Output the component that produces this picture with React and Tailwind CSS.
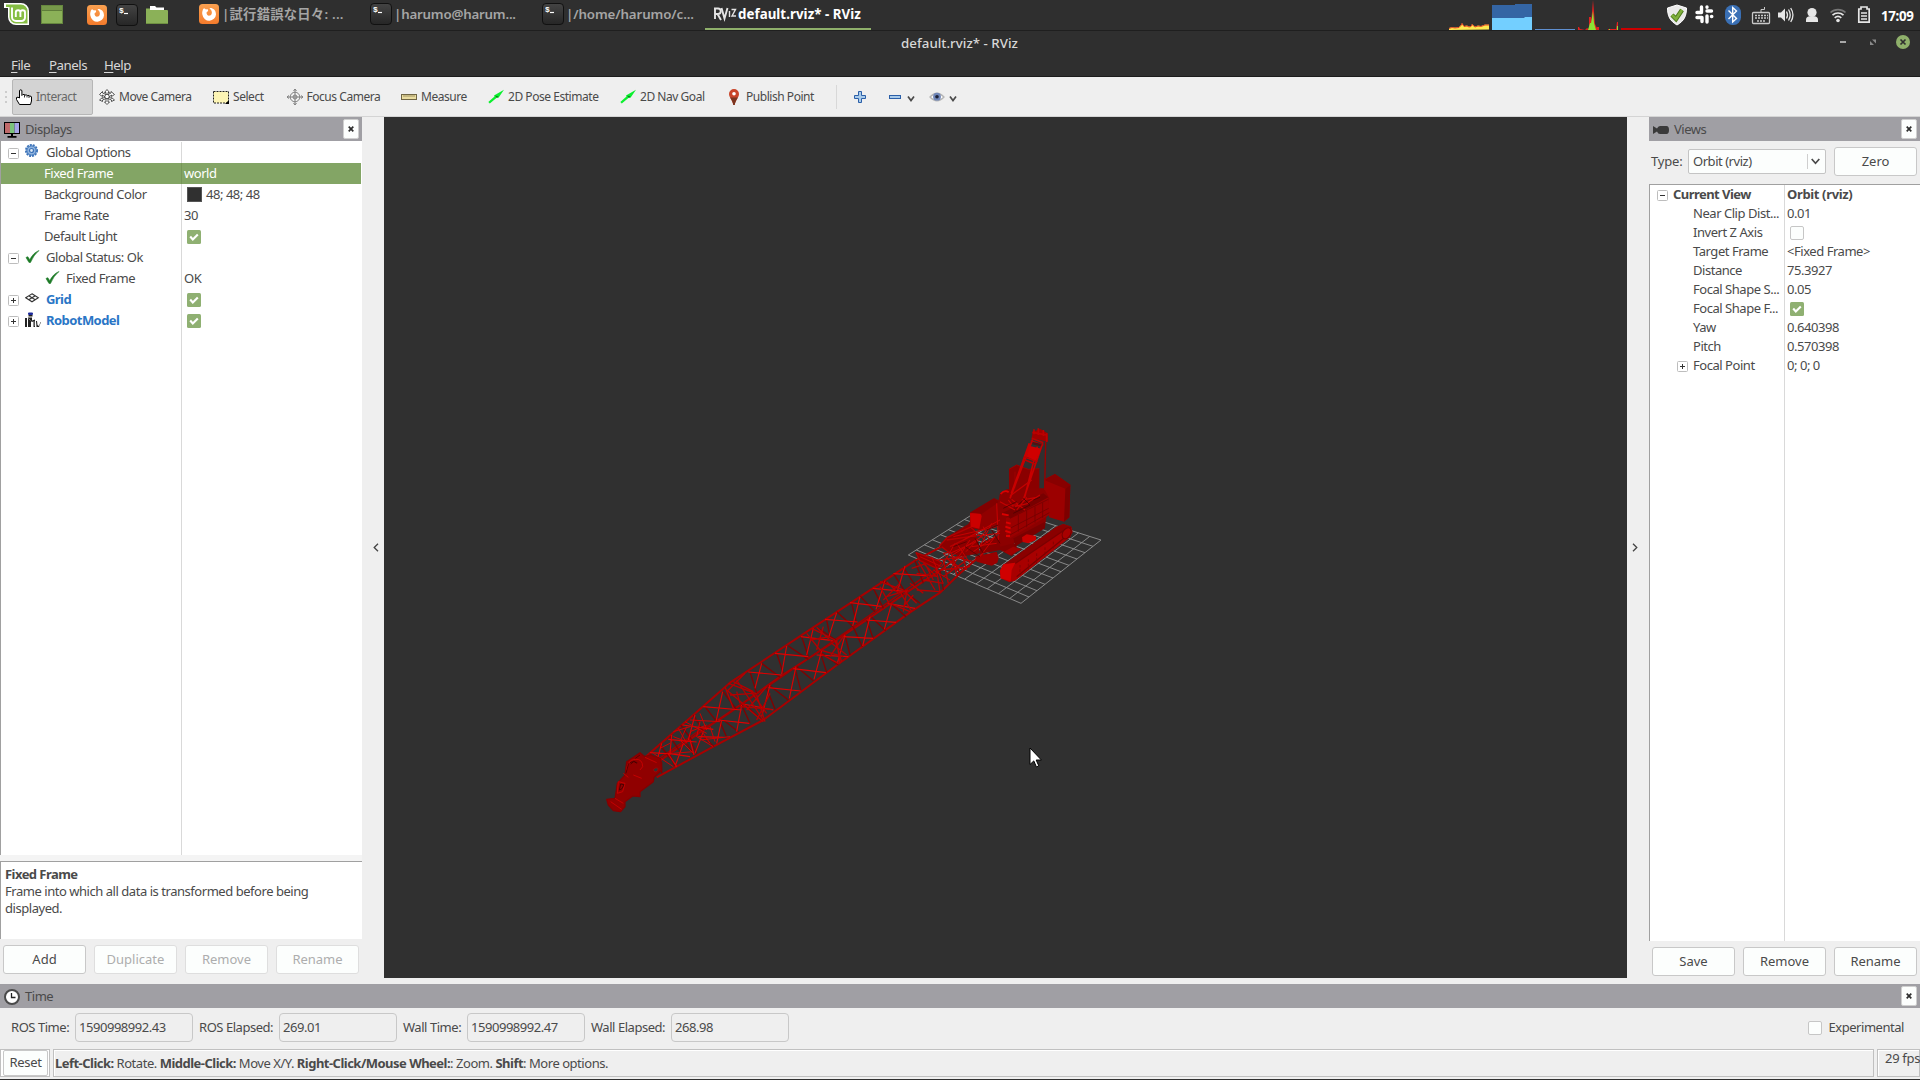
import React from "react";

const PLUS = "plus";

function MintLogo() {
  return (
    <svg width="26" height="24" viewBox="0 0 26 24" className="block">
      <path d="M0 0h17a8 8 0 0 1 8 8v14H12a8 8 0 0 1-8-8V5H0z" fill="#fff" />
      <path d="M2 1.500h15a6.500 6.500 0 0 1 6.500 6.500v12.500H12a6.500 6.500 0 0 1-6.500-6.500V4H2z" fill="#86be43" />
      <path d="M8 4.500v9.500a4 4 0 0 0 4 4h5.500a3.500 3.500 0 0 0 3.500-3.500V9.500a2.300 2.300 0 0 0-4.600 0V14M16.400 9.500a2.300 2.300 0 0 0-4.600 0V14" fill="none" stroke="#fff" strokeWidth="1.900" />
    </svg>
  );
}

function Firefox() {
  return (
    <svg width="20" height="20" viewBox="0 0 20 20" className="block">
      <defs>
        <linearGradient id="ffg" x1="0" y1="0" x2="0" y2="1">
          <stop offset="0" stopColor="#f9a050" />
          <stop offset="1" stopColor="#f47b2c" />
        </linearGradient>
      </defs>
      <rect width="20" height="20" rx="3.500" fill="url(#ffg)" />
      <path d="M3.500 7C4 5 5 3.800 5.500 4.500L7 5.500C8.500 5 9.500 5.500 9 7L7.500 8.500C7.500 11 9 12 11 11.500C13 11 13.500 8 12 6L10.500 4.200C13 3.500 17 5.500 17 10.500A6.800 6.800 0 0 1 3.500 11C3 9.500 3.200 8 3.500 7Z" fill="#fff" />
    </svg>
  );
}

function Terminal() {
  return (
    <svg width="22" height="22" viewBox="0 0 22 22" className="block">
      <defs>
        <linearGradient id="tg" x1="0" y1="0" x2="0" y2="1">
          <stop offset="0" stopColor="#444" />
          <stop offset="1" stopColor="#262626" />
        </linearGradient>
      </defs>
      <rect x="0.500" y="0.500" width="21" height="21" rx="3.500" fill="url(#tg)" stroke="#111" />
      <text x="3" y="9" fontSize="8" fontWeight="700" fill="#fff" fontFamily="Liberation Mono, monospace">$</text>
      <path d="M8 9.500h4" stroke="#fff" strokeWidth="1.200" />
    </svg>
  );
}

function Folder() {
  return (
    <svg width="22" height="20" viewBox="0 0 22 20" className="block">
      <path d="M4 1h5l1.500 1.500H18V6H4z" fill="#fff" />
      <path d="M0 3.500h4V5h17a1 1 0 0 1 1 1v12a1 1 0 0 1-1 1H1a1 1 0 0 1-1-1z" fill="#8bb158" />
      <path d="M0 18.500h22" stroke="#6f9042" />
    </svg>
  );
}

function TopBar() {
  return (
    <div className="flex h-[31px] shrink-0 items-start border-b border-[#1f1f1f] text-[13.3px] leading-[29px] font-semibold tracking-normal text-[#a5a5a5]">
      <div className="ml-[4px] mt-[3px] w-[37px] shrink-0"><MintLogo /></div>
      <div className="mt-[5px] h-[19px] w-[22px] shrink-0 border border-[#66873f] bg-[#8bb158]"><div className="h-[5px] border-b border-[#5f7d3a] bg-[#76984a]" /></div>
      <div className="ml-[24px] mt-[5px] w-[29px] shrink-0"><Firefox /></div>
      <div className="mt-[4px] w-[30px] shrink-0"><Terminal /></div>
      <div className="mt-[5px] w-[53px] shrink-0"><Folder /></div>
      <div className="mt-[4px] w-[23px] shrink-0"><Firefox /></div>
      <div className="w-[148px] shrink-0 whitespace-nowrap tracking-[0.25px]">|試行錯誤な日々: ...</div>
      <div className="mt-[3px] w-[24px] shrink-0"><Terminal /></div>
      <div className="w-[148px] shrink-0 whitespace-nowrap tracking-[-0.2px]">|harumo@harum...</div>
      <div className="mt-[3px] w-[24px] shrink-0"><Terminal /></div>
      <div className="w-[139px] shrink-0 whitespace-nowrap tracking-[-0.1px]">|/home/harumo/c...</div>
      <div className="flex h-[30px] w-[166px] shrink-0 border-b-2 border-[#8fb06b] pl-[8px] font-bold tracking-[0.05px] text-white">
        <svg width="25" height="28" viewBox="0 0 25 28" className="shrink-0">
          <g fill="none" stroke="#e4e4e4" strokeWidth="1.900">
            <path d="M2 8v11M1 8.500h4a2.700 2.700 0 0 1 0 5.500H2.500M4.500 14l3.500 6" />
            <path d="M8.500 8l3 10.500L14.500 8" />
            <path d="M16.500 11v6M18.500 9.500h4l-3.500 6.500h4" strokeWidth="1.400" />
          </g>
        </svg>
        <span className="whitespace-nowrap">default.rviz* - RViz</span>
      </div>
      <svg width="216" height="30" viewBox="1448 0 216 30" className="ml-[577px] shrink-0">
        <path d="M1449 30v-2l3-1 3 .5 4-.5 2-2 1-2 2 3 3-.5 2 1 2-.5 1-2 3 2.500 3-1 3 .5 4-1.500h4v5z" fill="#fce94f" />
        <path d="M1449 28.500l3-1 3 .5 4-.5 2-2 1-2 2 3 3-.5 2 1 2-.5 1-2 3 2.500 3-1 3 .5 4-1.500h4" fill="none" stroke="#e02020" strokeWidth="0.800" />
        <path d="M1492 5h23V4h17v26h-40z" fill="#3465a4" />
        <path d="M1492 18h32l1-1h7v13h-40z" fill="#73cfff" />
        <rect x="1535" y="29" width="40" height="1" fill="#5f8fd0" />
        <path d="M1578 30v-3h1l1 2 5 1 2-2 2 1 0-12h2v6l1-11 1-12 1 12 1 12 2 4v-1h2v3zM1608 30v-1h8l1-7h1v8z" fill="#e02020" />
        <path d="M1588 30l2-7h1l2-12 1 12 2 7zM1609 29h1v1h-1zM1617 26h1v4h-1z" fill="#8ae234" />
        <rect x="1621" y="28" width="40" height="2" fill="#cc0000" />
      </svg>
      <svg width="206" height="30" viewBox="1664 0 206 30" className="shrink-0">
        <path d="M1677 5l9.500 3c0 8-2.500 13-9.500 17-7-4-9.500-9-9.500-17z" fill="#eaeaea" stroke="#fff" />
        <path d="M1672 15l4 4 6-9" fill="none" stroke="#4c7a1b" strokeWidth="4.500" />
        <path d="M1672 15l4 4 6-9" fill="none" stroke="#7fb03c" strokeWidth="2.500" />
        <g stroke="#fff" strokeWidth="3.400" strokeLinecap="round">
          <path d="M1701.500 7v5.500M1707 7v.2M1707 11h4.500M1697 12.500h4.500M1697 17.500h4.500M1702 17.500v4M1707 16v6M1711.500 16.500h.3" />
        </g>
        <rect x="1725" y="5" width="16" height="20" rx="7.500" fill="#3a70b5" />
        <path d="M1728.500 10.500l8 8-3.800 3.500V7.500l3.800 3.500-8 8" fill="none" stroke="#fff" strokeWidth="1.400" />
        <g fill="none" stroke="#c9c9c9">
          <rect x="1752.500" y="12.500" width="17" height="11" rx="1" strokeWidth="1.300" />
          <path d="M1755 15.500h13M1755 18h13M1757 21h9" strokeWidth="1.600" strokeDasharray="2 1" />
          <path d="M1761 12V9.500h3.500V7" />
        </g>
        <path d="M1778 12.500h3l4-4v13l-4-4h-3z" fill="#e6e6e6" />
        <path d="M1786.500 11.500q2 3.500 0 7M1788.500 9.500q3.500 5.500 0 11M1790.700 8q4.500 7 0 14" fill="none" stroke="#e6e6e6" strokeWidth="1.300" />
        <circle cx="1812" cy="12.500" r="4.600" fill="#e6e6e6" />
        <path d="M1806 22v-2.500q0-3 4-3.300h4q4 .3 4 3.300V22z" fill="#e6e6e6" />
        <g fill="none" strokeWidth="1.700">
          <path d="M1830.500 12.500a11 11 0 0 1 15 0" stroke="#777" />
          <path d="M1832.500 15.200a8 8 0 0 1 11 0M1834.700 17.800a5 5 0 0 1 6.600 0" stroke="#e6e6e6" />
        </g>
        <circle cx="1838" cy="20.500" r="1.800" fill="#e6e6e6" />
        <path d="M1861 7v2h-2.200v13.200h10.400V9H1867V7z" fill="none" stroke="#e6e6e6" strokeWidth="1.700" />
        <path d="M1861 13h6M1861 16h6M1861 19h6" stroke="#e6e6e6" strokeWidth="1.700" />
      </svg>
      <div className="ml-[11px] pt-[2px] font-bold tracking-[-0.3px] text-white">17:09</div>
    </div>
  );
}

function TitleBar() {
  return (
    <div className="flex h-[46px] shrink-0 flex-col border-b border-[#1c1c1c]">
      <div className="flex h-[24px] items-center">
        <div className="w-[1839px] pl-[80px] text-center text-[13.3px] leading-[24px] font-medium tracking-[0.02px] text-[#d8d8d8]">default.rviz* - RViz</div>
        <svg width="81" height="24" viewBox="1839 31 81 24">
          <path d="M1840 42h6" stroke="#a8a8a8" strokeWidth="2" />
          <path d="M1872 39.500h4v4zM1870 41v4h4z" fill="#8a8a8a" />
          <circle cx="1903" cy="42" r="7" fill="#8fb06b" />
          <path d="M1900.500 39.500l5 5m0-5l-5 5" stroke="#2f2f2f" strokeWidth="1.700" />
        </svg>
      </div>
      <div className="flex h-[20px] text-[13.3px] leading-[21px] tracking-[-0.5px] text-[#d8d8d8]">
        <div className="ml-[11px] w-[38px]"><u className="underline-offset-2">F</u>ile</div>
        <div className="w-[55px]"><u className="underline-offset-2">P</u>anels</div>
        <div><u className="underline-offset-2">H</u>elp</div>
      </div>
    </div>
  );
}

const toolIcons = {
  move: (
    <g fill="none" stroke="#444" strokeWidth="0.900">
      <path d="M8 .5l2.500 3H9v2l3-1.500V2.500l3.500 3-3 2V6L10 8l2.500 1.500V8.500l3 2.500-3 1.500v-1.500L9 9.500V13h1.500L8 15.500 5.500 13H7V9.500L3.500 11v1.500L.5 11l3-2.500v1L6 8 3.500 6v1.500L.5 5.500l3-3V4L7 5.500v-2H5.500z" fill="#fff" />
      <circle cx="8" cy="7.500" r="2.200" />
    </g>
  ),
  select: (
    <g>
      <rect x="0.500" y="2.500" width="15" height="11.500" fill="#fdf5b5" stroke="#222" strokeDasharray="2 1" />
      <path d="M16 11v4h-4z" fill="#000" />
    </g>
  ),
  focus: (
    <g fill="none" stroke="#808080">
      <circle cx="8" cy="8" r="4.800" />
      <circle cx="8" cy="8" r="2" />
      <path d="M8 0v16M0 8h16" />
      <path d="M6.500 2L8 0l1.500 2M6.500 14L8 16l1.500-2M2 6.500L0 8l2 1.500M14 6.500L16 8l-2 1.500" />
    </g>
  ),
  measure: (
    <g>
      <rect x="0.500" y="5.500" width="15" height="5" fill="#e9dca0" stroke="#6f6543" />
      <path d="M3 6v2M5 6v2M7 6v2M9 6v2M11 6v2M13 6v2" stroke="#8a7d50" strokeWidth="0.800" />
    </g>
  ),
  arrow: (
    <g>
      <path d="M.3 13L6.500 7.500 6 6.500 16 .8l-5.500 8-1.500-.3L1.800 14.500z" fill="#0bf02e" />
      <path d="M7 6.500l3.500 1-1.500 1.500z" fill="#0a7a1c" />
    </g>
  ),
  pin: (
    <g>
      <path d="M8 0a5 5 0 0 1 5 5C13 8.300 9.500 11 8.700 16H7.300C6.500 11 3 8.300 3 5A5 5 0 0 1 8 0z" fill="#c9452a" />
      <path d="M4 8.500h8C10.500 11 9 13 8.700 16H7.300C7 13 5.500 11 4 8.500z" fill="#7a3520" />
      <circle cx="8" cy="4.800" r="1.800" fill="#fff" />
    </g>
  ),
};

const tools = [
  ["move", "Move Camera", "w-[114px]"],
  ["select", "Select", "w-[73.500px]"],
  ["focus", "Focus Camera", "w-[114.500px]"],
  ["measure", "Measure", "w-[87px]"],
  ["arrow", "2D Pose Estimate", "w-[132px]"],
  ["arrow", "2D Nav Goal", "w-[106px]"],
  ["pin", "Publish Point", "w-[110px]"],
];

function Chevron() {
  return (
    <svg width="8" height="8" viewBox="0 0 8 8"><path d="M1 1.500l3 4 3-4" fill="none" stroke="#4a4a4a" strokeWidth="1.700" /></svg>
  );
}

function Toolbar() {
  return (
    <div className="flex h-[40px] shrink-0 items-center border-b border-[#d4d4d4] bg-[#efefef] text-[12px]">
      <div className="ml-[5px] flex w-[7px] flex-col gap-[3px]">
        <i className="block size-[2px] bg-[#ccc]" /><i className="block size-[2px] bg-[#ccc]" /><i className="block size-[2px] bg-[#ccc]" />
      </div>
      <div className="flex h-[36px] w-[81px] items-center gap-[4px] rounded-[2px] border border-[#b6b6b6] bg-[#d3d3d3] pl-[3px]">
        <svg width="16" height="16" viewBox="0 0 16 16">
          <path d="M3.500 9V2a1.200 1.200 0 0 1 2.400 0v4.500l1-1h1.500l.6.500h1.500l.8.500h1.700l.8.700H15l.5.800v4L14.500 15.500H3.500L.5 10.500V8.500l1.500-.3z" fill="#fff" stroke="#000" strokeLinejoin="round" />
          <path d="M8.500 6v2.500M11 6.500v2M13 7v2" stroke="#000" strokeWidth="0.800" />
        </svg>
        <span className="text-[#686868]">Interact</span>
      </div>
      <div className="ml-[6px] flex">
        {tools.map(([k, label, w], i) => (
          <div key={i} className={`flex items-center gap-[4px] whitespace-nowrap ${w}`}>
            <svg width="16" height="16" viewBox="0 0 16 16" className="shrink-0">{toolIcons[k]}</svg>
            {label}
          </div>
        ))}
      </div>
      <div className="h-[24px] w-px bg-[#d8d8d8]" />
      <svg width="12" height="12" viewBox="0 0 12 12" className="ml-[17px]"><path d="M4.500.5h3v4h4v3h-4v4h-3v-4h-4v-3h4z" fill="#a9cbea" stroke="#2b5fa8" /></svg>
      <svg width="12" height="12" viewBox="0 0 12 12" className="ml-[23px]"><rect x="0.500" y="4.500" width="11" height="3" fill="#a9cbea" stroke="#2b5fa8" /></svg>
      <div className="ml-[6px] pt-[4px]"><Chevron /></div>
      <svg width="16" height="12" viewBox="0 0 16 12" className="ml-[14px]">
        <path d="M1 6Q8-1.500 15 6 8 13.500 1 6z" fill="#fff" stroke="#b5b5b5" strokeWidth="1.300" />
        <circle cx="8" cy="5.700" r="3.900" fill="#6f86b8" />
        <circle cx="8" cy="5.700" r="1.800" fill="#1b2036" />
      </svg>
      <div className="ml-[4px] pt-[4px]"><Chevron /></div>
    </div>
  );
}

function CloseBtn() {
  return (
    <div className="mr-[3px] flex h-[20px] w-[16px] items-center justify-center rounded-[2px] border border-[#cfcfcf] bg-[#fcfefd]">
      <svg width="6" height="6" viewBox="0 0 6 6"><path d="M.7.7l4.600 4.600m0-4.600L.7 5.300" stroke="#2d2d2d" strokeWidth="1.700" /></svg>
    </div>
  );
}

function DockTitle({ icon, children }) {
  return (
    <div className="flex h-[24px] shrink-0 items-center bg-[#a09fa4] pl-[4px]">
      <svg width="16" height="16" viewBox="0 0 16 16" className="mt-px">{icon}</svg>
      <span className="ml-[5px] flex-1 pt-[2px]">{children}</span>
      <CloseBtn />
    </div>
  );
}

function Expander({ kind }) {
  return (
    <svg width="11" height="11" viewBox="0 0 11 11" className="shrink-0">
      <rect x="0.500" y="0.500" width="10" height="10" rx="1" fill="#fff" stroke="#bdbdbd" />
      <path d={kind === PLUS ? "M3 5.500h5M5.500 3v5" : "M3 5.500h5"} stroke="#333" />
    </svg>
  );
}

function Check({ on = true }) {
  return on ? (
    <svg width="14" height="14" viewBox="0 0 14 14">
      <rect width="14" height="14" rx="1.500" fill="#8fb072" />
      <path d="M3.200 6.500l2.600 3 5-5" fill="none" stroke="#fff" strokeWidth="2.100" />
    </svg>
  ) : (
    <svg width="14" height="14" viewBox="0 0 14 14"><rect x="0.500" y="0.500" width="13" height="13" rx="1.500" fill="#fcfefd" stroke="#c6c6c6" /></svg>
  );
}

function Btn({ children, off }) {
  return (
    <div className={`flex h-[29px] w-[83px] items-center justify-center rounded-[3px] border bg-[#fcfefd] tracking-normal ${off ? "border-[#dedede] text-[#adadad]" : "border-[#c8c8c8]"}`}>{children}</div>
  );
}

const tick = <path d="M1 8.500l1.800-.8 2 3Q8 4 14 1.500 8.500 6 5.500 13.500H4z" fill="#1c7a26" stroke="#1c7a26" strokeWidth="0.600" />;
const gear = (
  <g>
    <circle cx="6.500" cy="6.500" r="5.600" fill="#a9c5e8" stroke="#3b72b8" strokeWidth="1.800" strokeDasharray="2 1" />
    <circle cx="6.500" cy="6.500" r="4.500" fill="#8fb3de" stroke="#3b72b8" strokeWidth="0.800" />
    <circle cx="6.500" cy="6.500" r="2" fill="#dce8f5" stroke="#3b72b8" strokeWidth="1.200" />
  </g>
);
const gridIcon = (
  <path d="M7 2.800l6.300 4-6.300 4-6.300-4zM3.800 4.800l6.400 4M10.200 4.800l-6.400 4" fill="none" stroke="#333" strokeWidth="1.100" />
);
const robotIcon = (
  <g>
    <rect x="3" y="0.500" width="5" height="2.500" rx="1" fill="#1d2a9a" />
    <path d="M3.500 3h4v1.500h-4zM0 6h2v9H0zM3 5.500h4v3l3-1v7.500H8.500V10L6 9.500v5.500H3zM11 9h1l.5 4 1.500 1 1.500-4h.5l-2 5h-2.500z" fill="#222" />
    <path d="M3.500 6.500l2 2M9 9v5" stroke="#888" />
  </g>
);

const displays = [
  { exp: "minus", icon: gear, name: "Global Options" },
  { name: "Fixed Frame", value: "world", sel: true, pad: "pl-[43px]" },
  { name: "Background Color", swatch: true, pad: "pl-[43px]" },
  { name: "Frame Rate", value: "30", pad: "pl-[43px]" },
  { name: "Default Light", check: true, pad: "pl-[43px]" },
  { exp: "minus", icon: tick, name: "Global Status: Ok" },
  { icon: tick, name: "Fixed Frame", value: "OK", pad: "pl-[44px]" },
  { exp: PLUS, icon: gridIcon, name: "Grid", check: true, link: true },
  { exp: PLUS, icon: robotIcon, name: "RobotModel", check: true, link: true },
];

function Displays() {
  return (
    <div className="flex w-[362px] shrink-0 flex-col">
      <DockTitle
        icon={
          <g>
            <rect x="0.500" y="0.500" width="15" height="11" fill="#000" stroke="#000" />
            <rect x="1" y="1" width="5" height="10" fill="#c06a6a" />
            <rect x="6" y="1" width="4.500" height="10" fill="#7cc47c" />
            <rect x="10.500" y="1" width="4.500" height="10" fill="#a5a5e8" />
            <path d="M7 12h2v2h3.500v1.700h-9V14H7z" fill="#000" />
          </g>
        }
      >
        Displays
      </DockTitle>
      <div className="relative flex h-[714px] flex-col border-l border-[#a0a0a0] bg-white pt-px">
        <div className="absolute top-px bottom-0 left-[180px] w-px bg-[#d9d9d9]" />
        {displays.map((r, i) => (
          <div key={i} className={`relative flex h-[21px] items-center leading-[18px] ${r.sel ? "mr-px bg-[#83a565] text-white" : ""}`}>
            <div className={`flex w-[180px] items-center ${r.pad || "pl-[7px]"} ${r.link ? "font-bold tracking-[-0.55px] text-[#2a76c6]" : ""}`}>
              {r.exp && <div className="mr-[6px] pt-[2px]"><Expander kind={r.exp} /></div>}
              {r.icon && <svg width="16" height="16" viewBox="0 0 16 16" className="mr-[5px] mb-px shrink-0">{r.icon}</svg>}
              <span className="mb-[2px] whitespace-nowrap">{r.name}</span>
            </div>
            {r.sel && <div className="h-full w-px bg-[#779658]" />}
            <div className={`flex items-center ${r.sel ? "pl-[2px]" : "pl-[3px]"}`}>
              {r.swatch && (
                <>
                  <div className="ml-[3px] size-[15px] border border-[#555] bg-[#303030]" />
                  <span className="mb-[2px] ml-[4px]">48; 48; 48</span>
                </>
              )}
              {r.value && <span className="mb-[2px]">{r.value}</span>}
              {r.check && <div className="ml-[3px]"><Check /></div>}
            </div>
          </div>
        ))}
      </div>
      <div className="h-[6px] bg-[#f4f4f4]" />
      <div className="h-[78px] border-t border-l border-[#a0a0a0] bg-white pt-[4px] pl-[4px] leading-[17px]">
        <div className="font-bold tracking-[-0.55px]">Fixed Frame</div>
        <div>Frame into which all data is transformed before being</div>
        <div>displayed.</div>
      </div>
      <div className="flex gap-[8px] pt-[6px] pl-[3px]">
        <Btn>Add</Btn><Btn off>Duplicate</Btn><Btn off>Remove</Btn><Btn off>Rename</Btn>
      </div>
    </div>
  );
}

const views = [
  ["Near Clip Dist...", "0.01"],
  ["Invert Z Axis", false],
  ["Target Frame", "<Fixed Frame>"],
  ["Distance", "75.3927"],
  ["Focal Shape S...", "0.05"],
  ["Focal Shape F...", true],
  ["Yaw", "0.640398"],
  ["Pitch", "0.570398"],
  ["Focal Point", "0; 0; 0"],
];

function Views() {
  return (
    <div className="flex w-[271px] shrink-0 flex-col">
      <DockTitle icon={<path d="M0 4l4 2.500Q5 4 7 4h6.500Q16 4 16 8t-2.500 4H7Q5 12 4 9.500L0 12z" fill="#3a3a3a" />}>Views</DockTitle>
      <div className="flex h-[43px] items-center pb-[2px] pl-[2px]">
        <span className="w-[37px] tracking-[-0.2px]">Type:</span>
        <div className="flex h-[25px] w-[138px] items-center rounded-[2px] border border-[#c4c4c4] bg-[#fcfefd] pl-[4px]">
          <span className="w-[114px]">Orbit (rviz)</span>
          <div className="mr-[3px] h-[15px] w-px bg-[#cfcfcf]" />
          <svg width="9" height="7" viewBox="0 0 9 7"><path d="M.7 1l3.800 4.300L8.300 1" fill="none" stroke="#4a4a4a" strokeWidth="1.700" /></svg>
        </div>
        <div className="ml-[8px]"><Btn>Zero</Btn></div>
      </div>
      <div className="relative h-[757px] border-t border-l border-[#a0a0a0] bg-white">
        <div className="absolute inset-y-0 left-[134px] w-px bg-[#d9d9d9]" />
        <div className="flex h-[19px] items-center font-bold tracking-[-0.55px]">
          <div className="flex w-[137px] items-center gap-[5px] pl-[7px]"><div className="pt-[2px]"><Expander /></div>Current View</div>
          <span className="tracking-[-0.35px]">Orbit (rviz)</span>
        </div>
        {views.map(([n, v], i) => (
          <div key={n} className="flex h-[19px] items-center">
            <div className="flex w-[137px] items-center whitespace-nowrap">
              <div className="w-[43px] pt-[2px] pl-[27px]">{i === 8 && <Expander kind={PLUS} />}</div>
              {n}
            </div>
            {typeof v === "string" ? v : <div className="ml-[3px] pt-px"><Check on={v} /></div>}
          </div>
        ))}
      </div>
      <div className="flex gap-[8px] pt-[6px] pl-[3px]"><Btn>Save</Btn><Btn>Remove</Btn><Btn>Rename</Btn></div>
    </div>
  );
}

// Ground grid: ten cells per side, spanned by three of its corners.
const gridLines = Array.from({ length: 11 }, (_, i) => {
  const t = i / 10;
  return `M${25 + 338 * t} ${435 + 145 * t}L${265 + 338 * t} ${283 + 107 * t}M${25 + 240 * t} ${435 - 152 * t}L${363 + 240 * t} ${580 - 190 * t}`;
}).join("");

function Crane() {
  return (
    <svg viewBox="384 117 1243 861" className="block h-full w-full">
      {/* Boom: chords and lattice */}
      <g transform="translate(590 540) scale(.33333)" fill="none" stroke="#b00000" strokeWidth="3.600" strokeLinejoin="round">
        <g transform="translate(930 -390)">
          <path d={gridLines} stroke="#8f8f8f" strokeWidth="2.800" />
        </g>
        <path d="M162 655L310 525 420 428 670 262 975 62 1045 25 1100 0M200 712L370 620 520 540 745 372 960 217 1050 158 1110 100 1180 40M190 676L330 577 455 492 575 407 690 333 850 226 950 157 1050 92 1140 20" stroke="#a80000" strokeWidth="6" />
        <path d="M195 664L330 570 400 532 500 462 640 366 740 296 880 197 1000 112 1050 80" stroke="#a00000" strokeWidth="4" />
        <path d="M515 370L570 412M595 318L655 358M680 262L738 300M740 215L790 260M810 168L855 215M880 122L940 165M940 82L975 135M480 395L500 460M560 340L580 400M635 290L655 350M710 240L720 290M785 190L800 250M850 145L880 205M910 100L945 155M540 437L595 480M620 380L670 422M615 385L632 450M690 335L710 397M690 335L745 375M790 262L817 320M845 232L887 272M830 240L850 297M900 188L948 230M950 160L990 190M345 500L380 545M400 455L440 510M400 540L445 575M390 545L410 592M455 495L480 550M460 490L515 540M530 445L555 508M310 525L340 575M272 555L305 600M240 590L270 635M210 615L240 655M180 640L210 672M215 665L215 700M240 645L255 680M290 610L312 645M330 580L372 620M975 62L1000 130M1050 90L1060 150M1090 60L1110 100M765 285L780 345M300 600L320 640" stroke="#820000" strokeWidth="4" />
        <path d="M475 396L575 405M515 370L495 445M555 340L655 350M590 318L575 402M633 290L728 302M670 265L650 345M705 238L803 246M740 218L716 292M780 188L875 199M810 170L788 258M848 145L950 155M885 122L858 208M910 101L1010 107M945 78L922 155M340 500L455 510M398 455L378 545M278 555L370 568M315 525L295 600M235 598L320 606M245 585L240 640M180 638L250 642M215 610L200 665M535 443L632 453M540 435L515 530M610 386L708 398M618 380L598 475M695 332L672 418M680 345L775 350M760 290L850 295M765 285L742 370M840 230L818 318M830 240L918 247M905 190L883 268M893 190L975 205M385 540L478 550M395 540L380 610M455 495L440 575M460 492L550 510M325 590L400 592M340 575L315 640M280 610L255 680M235 640L300 650M300 600L312 645M235 642L260 680" stroke="#e00000" strokeWidth="3.400" />
        <path d="M415 430L500 462M430 425L490 455M410 450L470 500M405 440L430 505M440 420L520 540M465 400L410 455M480 450L530 520M455 490L520 545M450 500L545 508M440 455L450 490M420 465L490 460M500 465L525 545M530 440L470 510M500 540L540 460M665 265L735 300M680 262L725 305M650 280L690 330M660 300L720 290M700 260L680 330M690 330L760 350M690 340L745 370M735 300L755 365M760 290L720 350M725 310L770 345M740 300L750 370M870 125L940 150M890 125L925 160M870 140L900 195M880 180L930 130M930 155L965 215M950 155L940 215M900 190L960 215M890 170L955 150M970 165L940 200M945 155L980 190M960 130L1000 160M985 65L1035 150M1000 70L1040 110M980 100L1045 110M1000 60L1030 120M1035 60L1050 155M965 85L1010 70M980 150L1050 155M1000 120L1060 130M1060 60L1075 130M1060 110L1130 60M1070 55L1120 90M1080 20L1100 105M1050 90L1140 80M1090 50L1150 65M1105 5L1130 90M1060 40L1170 20" stroke="#b40000" strokeWidth="4" />
        <path d="M250 575L300 560M265 565L290 610M285 545L350 580M330 520L350 570M300 540L390 545M330 545L320 590M300 575L350 555M320 590L370 620M360 560L375 605M340 580L360 610M250 640L310 635M270 600L310 640M290 560L270 605M210 625L240 610M330 600L420 590M190 640L250 680M250 590L290 605" stroke="#d00000" strokeWidth="3" />
        <path d="M978 38L990 62 1040 85 1055 70 1045 62z" fill="#900000" />
        {/* Boom tip and hook block */}
        <path d="M165 650L180 645 212 655 215 690 192 712 190 725 150 755 150 770 128 768 105 785 105 800 92 815 70 812 55 795 50 778 75 775 82 730 105 705 110 665 130 652 150 638 158 645z" fill="#900000" stroke="#850000" />
        <path d="M165 652L200 668M110 690Q112 660 135 658T158 680L150 690M85 725L105 730 98 755 82 760zM130 705L155 715M75 775L100 790M62 785L95 808M100 700L115 712" stroke="#c40000" strokeWidth="3" />
        <path d="M120 668q10-8 22 0M150 645l-14 10M108 700l8-30" stroke="#5a0000" strokeWidth="3" />
        <path d="M190 688q6-6 14-4 2 8-6 12-8 0-8-8z" fill="#303030" strokeWidth="2" />
        <path d="M92 732l10 2-6 12-8 4zM122 672l10-8 8 6" stroke="#4a0000" strokeWidth="3" />
      </g>
      {/* Carbody, cab, mast and tracks */}
      <g transform="translate(900 410) scale(.33333)" strokeLinejoin="round">
        <path d="M118 410L140 382 205 342 215 325 230 380 240 430 180 440z" fill="#8c0000" />
        <path d="M118 408L142 382 215 350M140 390L210 380M150 410L230 370M125 410L150 430" stroke="#b40000" strokeWidth="4" fill="none" />
        <path d="M225 440L290 425 296 445 292 458 275 467 230 455z" fill="#9a0000" />
        <path d="M240 400L300 375 350 405 350 425 335 438 300 420 240 432z" fill="#840000" />
        <path d="M327 178L350 165 385 178 418 176 418 250 327 262z" fill="#8a0000" />
        <path d="M327 178L350 165 385 178 418 176 M345 185v50" fill="none" stroke="#a00000" strokeWidth="3" />
        <path d="M432 208L465 192 511 224 508 322 492 335 448 322 432 240z" fill="#9c0000" />
        <path d="M432 210L496 236 511 224 465 192z" fill="#880000" />
        <path d="M496 236L511 224 508 322 492 335z" fill="#7d0000" />
        <path d="M210 308L282 265 300 272 305 340 245 362 210 352z" fill="#900000" />
        <path d="M210 310L240 308 245 318 238 356 212 350z" fill="#cc0000" />
        <path d="M210 308L282 265 298 275 245 312z" fill="#820000" />
        <path d="M300 250L320 238 400 235 432 235 448 265 440 315 435 350 340 400 300 410 290 300z" fill="#8c0000" />
        <path d="M318 325L445 262 448 315 330 385 318 380z" fill="#9a0000" />
        <path d="M305 310L430 250 445 262 330 325z" fill="#780000" />
        <path d="M330 325L445 268M330 355L446 295M355 315v50M380 302v50M405 290v48M428 278v46M330 375L448 308" fill="none" stroke="#740000" strokeWidth="2.500" />
        <path d="M318 337l14 4M316 350l16 5M316 363l16 5M318 378h12M306 312l20 4M302 252q12-14 24-5" fill="none" stroke="#dc0000" strokeWidth="5.500" />
        <path d="M340 385L435 335 435 355 345 410z" fill="#7a0000" />
        <path d="M366 382L380 373 408 378 408 390 385 400 368 396z" fill="#c80000" />
        <path d="M312 425L340 410 365 418 330 436z" fill="#a00000" />
        <path d="M198 425L270 350M190 390L300 330M215 410L290 400M240 440L300 360M205 380L300 370M250 350L270 395M275 340L240 410M290 280L295 390M160 380L290 350M210 350L265 400M220 425L285 380M150 440L260 370" stroke="#c80000" strokeWidth="3" fill="none" />
        <path d="M125 470L165 400M110 450L200 440M150 480L210 390M130 430L180 490M170 400L210 460M150 430L240 390M100 480L150 510M95 440L130 520M60 440L125 470" stroke="#c40000" strokeWidth="3" fill="none" />
        <path d="M195 410L240 440M260 360L295 345M225 385L250 430M160 410L200 395M275 360L300 400" stroke="#5e0000" strokeWidth="3" fill="none" />
        {/* A-frame mast */}
        <path d="M398 88L330 265M428 100L368 275M412 110L374 262M388 100L334 250" stroke="#c80000" strokeWidth="5" fill="none" />
        <path d="M398 66L420 56 443 70 444 95 395 85z" fill="#a00000" />
        <path d="M397 67L440 75M402 58v15M415 55v20M430 60v18M440 70v26M395 85L430 98M392 92L430 106M372 140L412 155M370 148L405 162" stroke="#bc0000" strokeWidth="5" fill="none" />
        <path d="M390 108L424 116 408 152 380 140z" fill="#d00000" />
        <path d="M399 96l26 6-2 7-26-6z" fill="#4c1515" />
        <path d="M437 95L434 240" stroke="#990000" strokeWidth="4" />
        <path d="M330 258L395 210M335 268L375 300M345 290L385 280M300 275L345 300M350 300L380 262M320 285h50M325 270L340 290M380 280L420 255M365 270L410 262" stroke="#c40000" strokeWidth="3.500" fill="none" />
        <path d="M310 295l40-20M340 310l50-25M370 265l20 20M355 285l20-20M400 270l20-8" stroke="#4a0000" strokeWidth="2.500" fill="none" />
        {/* Near track */}
        <path d="M300 482L310 465 470 350 490 342 514 350 518 366 510 382 345 512 328 517 302 505z" fill="#a80000" />
        <path d="M310 465L470 350 490 342 514 350 490 360 346 458z" fill="#8a0000" />
        <path d="M300 482L310 463 346 458 335 480 332 514 302 505z" fill="#d00000" />
        <path d="M346 460L490 362 514 352M350 500L500 378" fill="none" stroke="#7a0000" strokeWidth="4" />
        <path d="M360 465v30M385 448v32M410 430v32M435 412v32M460 395v30" stroke="#850000" strokeWidth="3" strokeDasharray="8 5" />
        <ellipse cx="500" cy="370" rx="12" ry="18" transform="rotate(30 500 370)" fill="#a80000" stroke="#700000" strokeWidth="3" />
      </g>
      <path d="M1030 748v16.500l3.800-3.600 2.600 6 2.400-1-2.600-5.900h5.200z" fill="#fff" stroke="#000" strokeWidth="1" />
    </svg>
  );
}

const times = [
  ["ROS Time:", "1590998992.43", "w-[64px]"],
  ["ROS Elapsed:", "269.01", "w-[80px]"],
  ["Wall Time:", "1590998992.47", "w-[64px]"],
  ["Wall Elapsed:", "268.98", "w-[80px]"],
];

export default function App() {
  return (
    <div className="flex h-[1080px] w-[1920px] flex-col overflow-hidden bg-[#2f2f2f] font-['Noto_Sans','Noto_Sans_CJK_JP',sans-serif] text-[13px] tracking-[-0.46px] text-[#4a4a4a]">
      <TopBar />
      <TitleBar />
      <Toolbar />
      <div className="flex h-[867px] shrink-0 bg-[#efefef]">
        <Displays />
        <div className="flex h-[861px] w-[22px] items-center justify-center pl-[6px]">
          <svg width="6" height="9" viewBox="0 0 6 9"><path d="M5 .7L1.200 4.500 5 8.300" fill="none" stroke="#444" strokeWidth="1.300" /></svg>
        </div>
        <div className="h-[861px] w-[1243px] bg-[#303030]"><Crane /></div>
        <div className="flex h-[861px] w-[22px] items-center justify-center pr-[7px]">
          <svg width="6" height="9" viewBox="0 0 6 9"><path d="M1 .7l3.800 3.800L1 8.300" fill="none" stroke="#444" strokeWidth="1.300" /></svg>
        </div>
        <Views />
      </div>
      <DockTitle
        icon={
          <g>
            <circle cx="8" cy="8" r="7" fill="#fff" stroke="#4a4a4a" strokeWidth="2" />
            <path d="M7.500 4v4.500H11.500" fill="none" stroke="#222" strokeWidth="1.300" />
          </g>
        }
      >
        Time
      </DockTitle>
      <div className="flex h-[41px] shrink-0 bg-[#efefef] pt-[5px] pl-[11px]">
        {times.map(([l, v, w]) => (
          <div key={l} className="mr-[6px] flex h-[29px] items-center">
            <span className={`whitespace-nowrap ${w}`}>{l}</span>
            <div className="flex h-[29px] w-[118px] items-center rounded-[4px] border border-[#c8c8c8] pl-[3px]">{v}</div>
          </div>
        ))}
        <div className="ml-auto flex h-[29px] items-center gap-[7px] pr-[16px]"><Check on={false} />Experimental</div>
      </div>
      <div className="flex h-[30px] shrink-0 gap-[3px] bg-[#efefef]">
        <div className="h-[28px] w-[50px] border border-[#c0c0c0] bg-white pl-[2px]">
          <div className="flex h-[26px] w-[45px] items-center justify-center rounded-[2px] border border-[#c8c8c8] bg-[#fcfefd] tracking-[-0.3px]">Reset</div>
        </div>
        <div className="h-[28px] w-[1821px] border border-[#c0c0c0] pl-px leading-[27px] shadow-[inset_1px_1px_0_#fff] [&>b]:tracking-[-0.52px]">
          <b>Left-Click:</b> Rotate. <b>Middle-Click:</b> Move X/Y. <b>Right-Click/Mouse Wheel:</b>: Zoom. <b>Shift</b>: More options.
        </div>
        <div className="h-[28px] w-[43px] border border-[#c0c0c0] pl-[7px] leading-[17px] tracking-[-0.3px] whitespace-nowrap shadow-[inset_1px_1px_0_#fff]">29 fps</div>
      </div>
    </div>
  );
}
